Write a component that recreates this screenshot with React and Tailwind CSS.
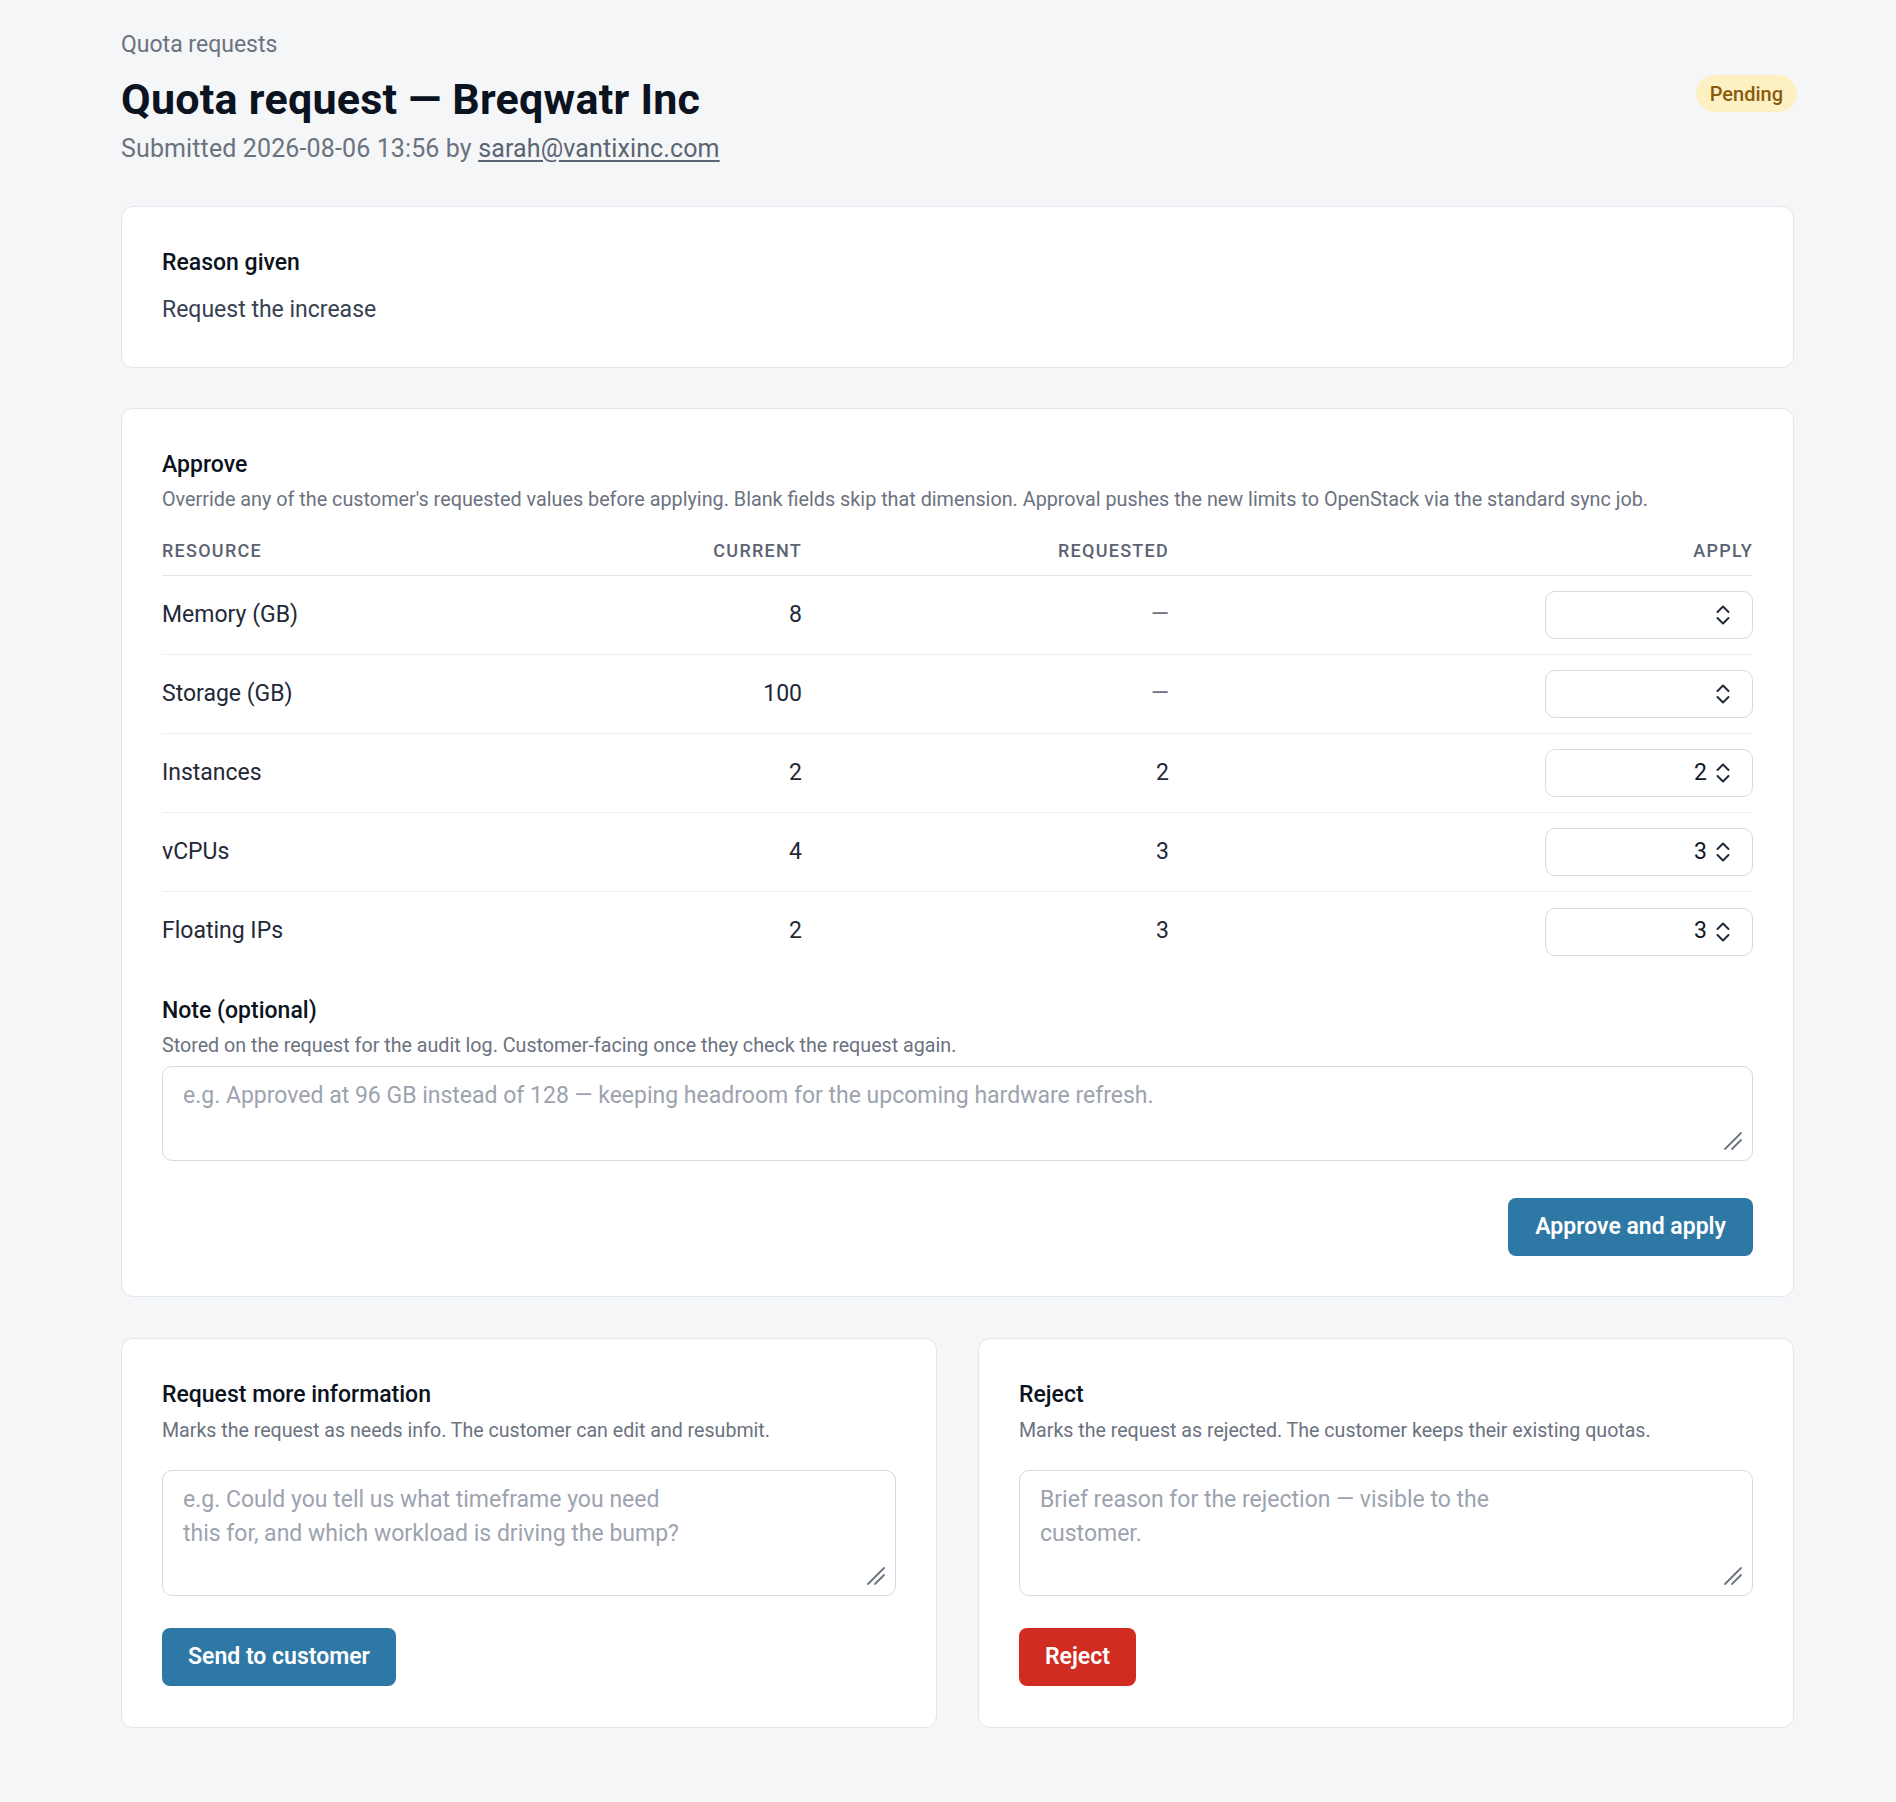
import React from "react";

function Spinner() {
  return (
    <svg width="16" height="24" viewBox="0 0 16 24" fill="none" className="shrink-0">
      <path d="M2.5 9 L8 3.5 L13.5 9" stroke="#1f2937" strokeWidth="2" strokeLinecap="round" strokeLinejoin="round" />
      <path d="M2.5 15 L8 20.5 L13.5 15" stroke="#1f2937" strokeWidth="2" strokeLinecap="round" strokeLinejoin="round" />
    </svg>
  );
}

function NumberBox({ value }) {
  return (
    <div className="ml-auto flex h-[48px] w-[208px] items-center justify-end gap-[8px] rounded-[10px] border border-[#d5d9e0] bg-white pr-[21px] text-[23px] text-[#111827]">
      <span>{value}</span>
      <Spinner />
    </div>
  );
}

function Grip() {
  return (
    <svg
      width="20"
      height="20"
      viewBox="0 0 20 20"
      fill="none"
      className="pointer-events-none absolute bottom-[10px] right-[10px]"
    >
      <path d="M2 18 L18 2" stroke="#6b7280" strokeWidth="1.8" strokeLinecap="round" />
      <path d="M9 18 L18 9" stroke="#6b7280" strokeWidth="1.8" strokeLinecap="round" />
    </svg>
  );
}

function Area({ h, mt, placeholder }) {
  return (
    <div className={`relative ${mt}`}>
      <textarea
        className={`block ${h} w-full resize-none rounded-[10px] border border-[#d5d9e0] bg-white px-[20px] py-[12px] text-[23px] leading-[34px] text-[#111827] outline-none placeholder:text-[#9ca3af]`}
        placeholder={placeholder}
      />
      <Grip />
    </div>
  );
}

export default function App() {
  const rows = [
    { name: "Memory (GB)", current: "8", requested: null, apply: "" },
    { name: "Storage (GB)", current: "100", requested: null, apply: "" },
    { name: "Instances", current: "2", requested: "2", apply: "2" },
    { name: "vCPUs", current: "4", requested: "3", apply: "3" },
    { name: "Floating IPs", current: "2", requested: "3", apply: "3" },
  ];

  return (
    <div className="min-h-screen bg-[#f5f6f8] font-['Roboto',sans-serif] text-[#111827]">
      <div className="pl-[121px] pr-[102px] pt-[30px] pb-[77px]">
        <div className="text-[23px] leading-[30px] text-[#6b7280]">Quota requests</div>
        <div className="mt-[15px] flex items-start justify-between">
          <div>
            <h1 className="text-[43px] font-bold leading-[48px] tracking-[0.006em] text-[#0b1220]">Quota request — Breqwatr Inc</h1>
            <p className="mt-[10px] text-[25px] leading-[32px] tracking-[0.005em] text-[#6b7280]">
              Submitted 2026-08-06 13:56 by{" "}
              <a className="text-[#5b6472] underline underline-offset-[3px]">sarah@vantixinc.com</a>
            </p>
          </div>
          <span className="-mr-[3px] flex h-[37px] items-center rounded-full bg-[#fdf1c4] px-[14px] text-[20px] font-medium text-[#8a5a0b]">
            Pending
          </span>
        </div>

        <section className="mt-[41px] rounded-[12px] border border-[#e3e6eb] bg-white px-[40px] py-[40px]">
          <h2 className="text-[23px] font-medium leading-[32px] text-[#0b1220]">Reason given</h2>
          <p className="mt-[14px] text-[23px] leading-[34px] text-[#374151]">Request the increase</p>
        </section>

        <section className="mt-[40px] rounded-[12px] border border-[#e3e6eb] bg-white px-[40px] pt-[40px] pb-[40px]">
          <h2 className="text-[23px] font-medium leading-[32px] text-[#0b1220]">Approve</h2>
          <p className="mt-[5px] text-[19.8px] leading-[28px] text-[#6b7280]">
            Override any of the customer's requested values before applying. Blank fields skip that dimension. Approval pushes the new limits to OpenStack via the standard sync job.
          </p>

          <div className="mt-[12px]">
            <div className="grid h-[50px] grid-cols-[420px_220px_367px_1fr] items-center border-b border-[#e3e6eb] text-[18px] font-medium uppercase tracking-[0.07em] text-[#5b6373]">
              <div>Resource</div>
              <div className="text-right">Current</div>
              <div className="text-right">Requested</div>
              <div className="text-right">Apply</div>
            </div>
            {rows.map((r, i) => (
              <div
                key={r.name}
                className={`grid h-[79px] grid-cols-[420px_220px_367px_1fr] items-center text-[23px] text-[#1f2937] ${
                  i < rows.length - 1 ? "border-b border-[#eceef1]" : ""
                }`}
              >
                <div>{r.name}</div>
                <div className="text-right">{r.current}</div>
                <div className={`text-right ${r.requested ? "" : "text-[#6b7280]"}`}>{r.requested ?? "—"}</div>
                <div className="flex justify-end">
                  <NumberBox value={r.apply} />
                </div>
              </div>
            ))}
          </div>

          <h2 className="mt-[24px] text-[23px] font-medium leading-[32px] text-[#0b1220]">Note (optional)</h2>
          <p className="mt-[5px] text-[19.7px] leading-[28px] text-[#6b7280]">
            Stored on the request for the audit log. Customer-facing once they check the request again.
          </p>
          <Area
            h="h-[95px]"
            mt="mt-[6px]"
            placeholder="e.g. Approved at 96 GB instead of 128 — keeping headroom for the upcoming hardware refresh."
          />
          <div className="mt-[37px] flex justify-end">
            <button className="h-[58px] rounded-[8px] bg-[#2e78a6] px-[27px] text-[23px] font-semibold text-white">
              Approve and apply
            </button>
          </div>
        </section>

        <div className="mt-[41px] grid grid-cols-2 gap-[41px]">
          <section className="rounded-[12px] border border-[#e3e6eb] bg-white px-[40px] pt-[40px] pb-[41px]">
            <h2 className="text-[23px] font-medium leading-[32px] text-[#0b1220]">Request more information</h2>
            <p className="mt-[6px] text-[19.6px] leading-[28px] text-[#6b7280]">
              Marks the request as needs info. The customer can edit and resubmit.
            </p>
            <Area
              h="h-[126px]"
              mt="mt-[25px]"
              placeholder={"e.g. Could you tell us what timeframe you need\nthis for, and which workload is driving the bump?"}
            />
            <button className="mt-[32px] h-[58px] rounded-[8px] bg-[#2e78a6] px-[26px] text-[23px] font-semibold text-white">
              Send to customer
            </button>
          </section>
          <section className="rounded-[12px] border border-[#e3e6eb] bg-white px-[40px] pt-[40px] pb-[41px]">
            <h2 className="text-[23px] font-medium leading-[32px] text-[#0b1220]">Reject</h2>
            <p className="mt-[6px] text-[19.6px] leading-[28px] text-[#6b7280]">
              Marks the request as rejected. The customer keeps their existing quotas.
            </p>
            <Area
              h="h-[126px]"
              mt="mt-[25px]"
              placeholder={"Brief reason for the rejection — visible to the\ncustomer."}
            />
            <button className="mt-[32px] h-[58px] rounded-[8px] bg-[#d12c22] px-[26px] text-[23px] font-semibold text-white">
              Reject
            </button>
          </section>
        </div>
      </div>
    </div>
  );
}
